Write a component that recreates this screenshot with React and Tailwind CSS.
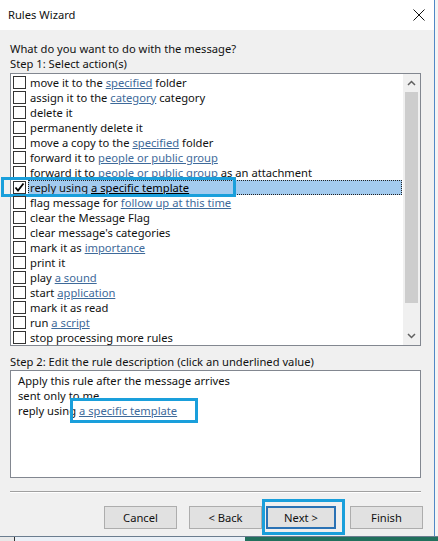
import React from 'react';

const actions = [
  [['move it to the '], ['specified', true], [' folder']],
  [['assign it to the '], ['category', true], [' category']],
  [['delete it']],
  [['permanently delete it']],
  [['move a copy to the '], ['specified', true], [' folder']],
  [['forward it to '], ['people or public group', true]],
  [['forward it to '], ['people or public group', true], [' as an attachment']],
  [['reply using '], ['a specific template', true]],
  [['flag message for '], ['follow up at this time', true]],
  [['clear the Message Flag']],
  [["clear message's categories"]],
  [['mark it as '], ['importance', true]],
  [['print it']],
  [['play '], ['a sound', true]],
  [['start '], ['application', true]],
  [['mark it as read']],
  [['run '], ['a script', true]],
  [['stop processing more rules']],
];

const SELECTED = 7;

const Checkbox = ({ checked }) => (
  <div className="w-[13px] h-[13px] shrink-0 border border-[#333] bg-white flex items-center justify-center">
    {checked && (
      <svg width="11" height="11" viewBox="0 0 11 11">
        <path d="M1.5 5.5 L4 8.5 L9.5 1.5" fill="none" stroke="#000" strokeWidth="1.8" />
      </svg>
    )}
  </div>
);

const Row = ({ parts, selected }) => (
  <div className="relative h-[15px] flex items-center pl-[2px]">
    <Checkbox checked={selected} />
    <div
      className={
        'ml-[2px] h-[15px] flex items-center px-[2px] whitespace-nowrap ' +
        (selected ? 'flex-1 bg-[#a3cbef] outline outline-1 outline-dotted outline-[#222] -outline-offset-1' : '')
      }
    >
      {parts.map(([t, link], i) =>
        link ? (
          <span key={i} className={selected ? 'underline text-black' : 'underline text-[#3e6a9a]'}>
            {t}
          </span>
        ) : (
          <span key={i} className="whitespace-pre">{t}</span>
        )
      )}
    </div>
    {selected && (
      <div className="absolute left-[-10px] top-[-3px] w-[235px] h-[20px] border-[3px] border-[#1a9fdb] pointer-events-none" />
    )}
  </div>
);

const Chevron = ({ up }) => (
  <svg width="9" height="6" viewBox="0 0 9 6">
    <path d={up ? 'M1 5 L4.5 1.5 L8 5' : 'M1 1 L4.5 4.5 L8 1'} fill="none" stroke="#606060" strokeWidth="1.5" />
  </svg>
);

const Button = ({ children, primary }) => (
  <div
    className={
      'h-[23px] flex items-center justify-center bg-[#e1e1e1] ' +
      (primary ? 'w-[70px] border-2 border-[#2a72b5]' : 'w-[73px] border border-[#adadad]')
    }
  >
    {children}
  </div>
);

export default function App() {
  return (
    <div
      className="w-[438px] h-[541px] flex flex-col bg-[#f0f0f0] text-[11.2px] text-[#111] overflow-hidden"
      style={{ fontFamily: '"Noto Sans", "Open Sans", sans-serif' }}
    >
      <div className="flex flex-1 min-h-0">
        <div className="w-[435px] flex flex-col border-r border-[#4f88c6]">
          {/* title bar */}
          <div className="h-[30px] bg-white flex items-center justify-between pl-[8px] pr-[9px]">
            <span>Rules Wizard</span>
            <svg width="12" height="12" viewBox="0 0 12 12">
              <path d="M0.5 0.5 L11.5 11.5 M11.5 0.5 L0.5 11.5" stroke="#111" strokeWidth="1" />
            </svg>
          </div>

          <div className="flex-1 flex flex-col px-[10px] pt-[11px] leading-[15px]">
            <div>What do you want to do with the message?</div>
            <div>Step 1: Select action(s)</div>

            <div className="mt-[2px] w-[411px] h-[273px] border border-[#828790] bg-white flex">
              <div className="flex-1 pt-[1px] pr-[1px]">
                {actions.map((parts, i) => (
                  <Row key={i} parts={parts} selected={i === SELECTED} />
                ))}
              </div>
              <div className="w-[17px] bg-[#f0f0f0] flex flex-col items-center">
                <div className="h-[18px] flex items-center justify-center">
                  <Chevron up />
                </div>
                <div className="w-[13px] h-[211px] bg-[#cdcdcd]" />
                <div className="flex-1" />
                <div className="h-[18px] flex items-center justify-center">
                  <Chevron />
                </div>
              </div>
            </div>

            <div className="mt-[8px]">Step 2: Edit the rule description (click an underlined value)</div>

            <div className="mt-[1px] w-[411px] h-[108px] border border-[#828790] bg-white pl-[7px] pt-[2px]">
              <div>Apply this rule after the message arrives</div>
              <div>sent only to me</div>
              <div className="relative">
                reply using <span className="underline text-[#3e6a9a]">a specific template</span>
                <div className="absolute left-[52px] top-[-5px] w-[128px] h-[25px] border-[3px] border-[#1a9fdb]" />
              </div>
            </div>

            <div className="mt-[13px] w-[411px] border-t border-[#a0a0a0] border-b border-b-white" />

            <div className="mt-[13px] flex justify-end pr-[1px]">
              <Button>Cancel</Button>
              <div className="w-[12px]" />
              <Button>&lt; Back</Button>
              <div className="w-[4px]" />
              <div className="relative">
                <Button primary>Next &gt;</Button>
                <div className="absolute left-[-4px] top-[-7px] w-[83px] h-[36px] border-[3px] border-[#1a9fdb]" />
              </div>
              <div className="w-[14px]" />
              <Button>Finish</Button>
            </div>
          </div>
        </div>
        <div className="flex-1 bg-[#f4f4f4]" />
      </div>

      {/* background behind dialog */}
      <div className="h-[5px] flex border-t border-[#6b7d8f]">
        <div className="w-[15px] bg-[#e8e8e8] border-r border-[#333]" />
        <div className="w-[230px] bg-[#eaf0f7]" />
        <div className="flex-1 bg-[#22705d]" />
      </div>
    </div>
  );
}
